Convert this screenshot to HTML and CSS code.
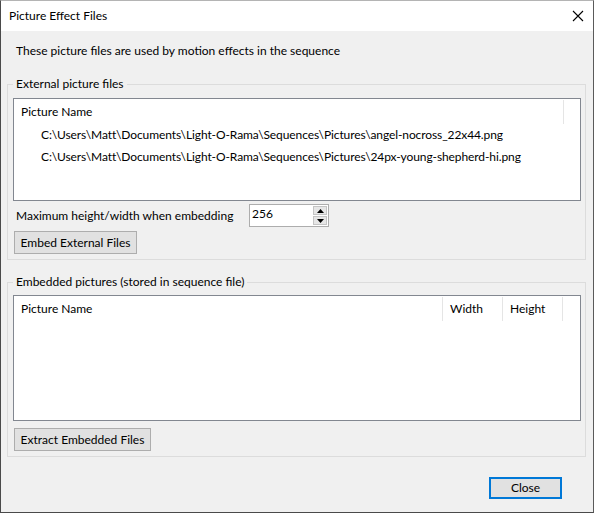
FILE: index.html
```html
<!DOCTYPE html>
<html lang="en">
<head>
<meta charset="UTF-8">
<title>Picture Effect Files</title>
<link rel="stylesheet" href="styles.css">
</head>
<body>

<div class="window">
  <div class="titlebar">
    <span class="title">Picture Effect Files</span>
    <svg class="close-x" width="12" height="12" viewBox="0 0 12 12">
      <path d="M1 1 L11 11 M11 1 L1 11" stroke="#000" stroke-width="1.1" fill="none"/>
    </svg>
  </div>

  <div class="content">
    <p class="intro">These picture files are used by motion effects in the sequence</p>

    <fieldset class="group group-ext">
      <legend>External picture files</legend>
      <div class="listview list-ext">
        <div class="lv-header">
          <div class="col col-name-wide">Picture Name</div>
        </div>
        <div class="lv-row">C:\Users\Matt\Documents\Light-O-Rama\Sequences\Pictures\angel-nocross_22x44.png</div>
        <div class="lv-row">C:\Users\Matt\Documents\Light-O-Rama\Sequences\Pictures\24px-young-shepherd-hi.png</div>
      </div>

      <div class="max-row">
        <span class="max-label">Maximum height/width when embedding</span>
        <div class="spin">
          <span class="spin-value">256</span>
          <div class="spin-btns">
            <div class="spin-btn">
              <svg width="7" height="4" viewBox="0 0 7 4"><path d="M3.5 0 L7 4 L0 4 Z" fill="#000"/></svg>
            </div>
            <div class="spin-btn">
              <svg width="7" height="4" viewBox="0 0 7 4"><path d="M0 0 L7 0 L3.5 4 Z" fill="#000"/></svg>
            </div>
          </div>
        </div>
      </div>

      <button class="btn btn-embed">Embed External Files</button>
    </fieldset>

    <fieldset class="group group-emb">
      <legend>Embedded pictures (stored in sequence file)</legend>
      <div class="listview list-emb">
        <div class="lv-header">
          <div class="col col-name">Picture Name</div>
          <div class="col col-num">Width</div>
          <div class="col col-num">Height</div>
        </div>
      </div>
      <button class="btn btn-extract">Extract Embedded Files</button>
    </fieldset>

    <div class="footer">
      <button class="btn btn-close">Close</button>
    </div>
  </div>
</div>

</body>
</html>
```

FILE: styles.css
```css
* {
  box-sizing: border-box;
}
html, body {
  margin: 0;
  padding: 0;
  background: #f0f0f0;
}
body {
  font-family: Lato, "Liberation Sans", sans-serif;
  font-size: 12px;
  color: #000;
}
.window {
  width: 594px;
  height: 513px;
  border: 1px solid #4a4a4a;
  border-top-color: #b4b4b4;
  border-right-color: #5a5a5a;
  background: #f0f0f0;
  display: flex;
  flex-direction: column;
}
.titlebar {
  height: 30px;
  background: #fff;
  display: flex;
  align-items: center;
  justify-content: space-between;
  padding: 0 9px 0 8px;
  flex-shrink: 0;
}
.title {
  line-height: 16px;
}
.close-x {
  margin-top: -1px;
}
.content {
  padding: 12px 0 0 6px;
  flex: 1;
  display: flex;
  flex-direction: column;
}
.intro {
  margin: 0 0 17px 9px;
  line-height: 16px;
}
.group {
  margin: 0;
  width: 579px;
  border: 1px solid #dcdcdc;
  padding: 6px 4px 5px 5px;
}
.group legend {
  padding: 0 3px;
  line-height: 16px;
}
.group-emb {
  margin-top: 14px;
  padding-top: 5px;
}
.listview {
  width: 568px;
  background: #fff;
  border: 1px solid #828790;
}
.list-ext {
  height: 103px;
}
.list-emb {
  height: 126px;
}
.lv-header {
  display: flex;
  height: 24px;
  margin-top: 1px;
}
.col {
  border-right: 1px solid #e5e5e5;
  padding: 4px 0 0 7px;
  line-height: 16px;
}
.col-name-wide {
  width: 550px;
}
.col-name {
  width: 429px;
}
.col-num {
  width: 60px;
}
.lv-row {
  height: 22px;
  line-height: 22px;
  padding-left: 27px;
  white-space: nowrap;
  letter-spacing: -0.1px;
}
.max-row {
  display: flex;
  align-items: center;
  margin-top: 3px;
  height: 23px;
}
.max-label {
  margin-left: 3px;
  width: 233px;
  line-height: 16px;
  white-space: nowrap;
}
.spin {
  width: 80px;
  height: 23px;
  background: #fff;
  border: 1px solid #adadad;
  display: flex;
  justify-content: space-between;
}
.spin-value {
  padding: 1px 0 0 2px;
  line-height: 16px;
}
.spin-btns {
  display: flex;
  flex-direction: column;
  padding: 1px 1px 1px 0;
}
.spin-btn {
  width: 14px;
  height: 9px;
  border: 1px solid #c4c4c4;
  background: #e6e6e6;
  display: flex;
  align-items: center;
  justify-content: center;
}
.spin-btn + .spin-btn {
  margin-top: 1px;
}
.btn {
  font-family: inherit;
  font-size: 12px;
  color: #000;
  background: #e1e1e1;
  border: 1px solid #adadad;
  height: 23px;
  padding: 0;
  line-height: 16px;
  display: block;
}
.btn-embed {
  width: 123px;
  margin: 4px 0 0 1px;
}
.btn-extract {
  width: 137px;
  margin: 7px 0 0 1px;
}
.footer {
  display: flex;
  justify-content: flex-end;
  padding: 20px 31px 0 0;
}
.btn-close {
  width: 73px;
  height: 22px;
  border: 2px solid #0078d7;
}
```
